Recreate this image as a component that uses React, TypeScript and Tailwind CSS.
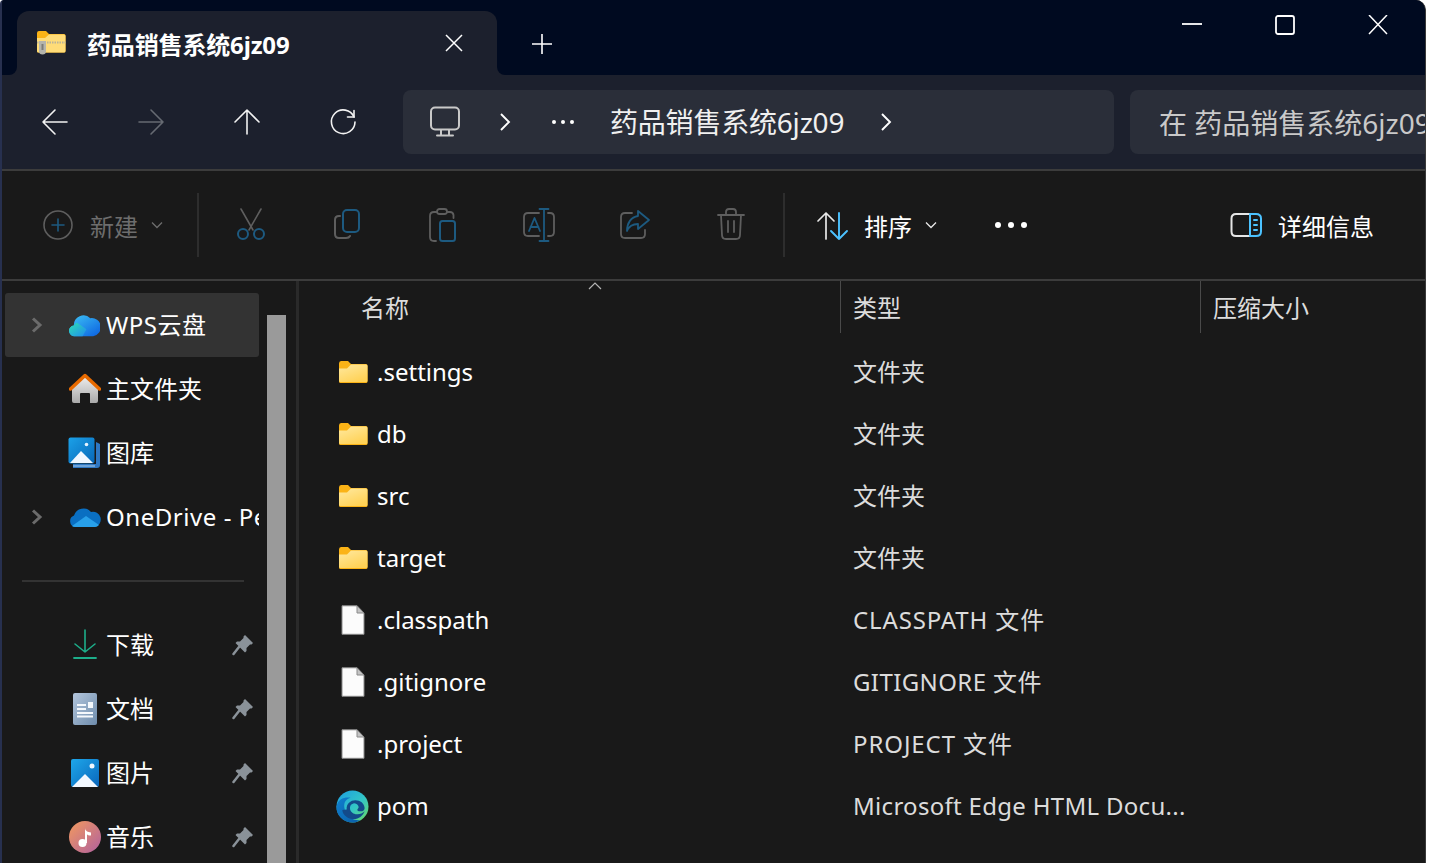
import React from "react";

const blue = "#1d5a80";
const gray = "#5e5e5e";

const Ico: React.FC<{ size?: number; children: React.ReactNode }> = ({ size = 32, children }) => (
    <svg width={size} height={size} viewBox={`0 0 ${size} ${size}`} fill="none" strokeLinecap="round" strokeLinejoin="round" className="shrink-0">
        {children}
    </svg>
);

const Folder = () => (
    <svg width="30" height="24" viewBox="0 0 30 24" className="shrink-0">
        <defs>
            <linearGradient id="folderFill" x1="0" y1="0" x2="0.6" y2="1">
                <stop offset="0" stopColor="#ffe9a0" />
                <stop offset="1" stopColor="#ffd257" />
            </linearGradient>
        </defs>
        <path d="M1 3.500Q1 1 3 1h7l3 3h15q1.500 0 1.500 1.500V21.500q0 1.500-1.500 1.500H2.500Q1 23 1 21.500Z" fill="#fbb316" />
        <path d="M1 8.500 9 8.500 13 4.500h15q1.500 0 1.500 1.500V21q0 1-1.500 1H2.500Q1 22 1 21Z" fill="url(#folderFill)" />
    </svg>
);

const FileIcon = () => (
    <svg width="24" height="30" viewBox="0 0 24 30" className="shrink-0 ml-[1px]">
        <path d="M1 .8H16L23 8V29.300H1Z" fill="#fcfcfc" stroke="#8a8a8a" strokeWidth="1" />
        <path d="M16 .8V8H23Z" fill="#c4c4c4" stroke="#8a8a8a" strokeWidth="1" />
    </svg>
);

const EdgeIcon = () => (
    <svg width="33" height="33" viewBox="0 0 34 34" className="shrink-0">
        <defs>
            <linearGradient id="edgeTop" x1="0" y1="0" x2="1" y2="1">
                <stop offset="0" stopColor="#1b9de2" />
                <stop offset="0.55" stopColor="#33c6c6" />
                <stop offset="1" stopColor="#6fdc5c" />
            </linearGradient>
            <linearGradient id="edgeLow" x1="0" y1="0" x2="1" y2="1">
                <stop offset="0" stopColor="#0f7fce" />
                <stop offset="1" stopColor="#0b5ea8" />
            </linearGradient>
        </defs>
        <circle cx="17" cy="17" r="16.500" fill="url(#edgeTop)" />
        <path d="M.5 17C2 9 9 7 15 8 9 10 7.500 14 9 20c2 7 9 12 16 11-3 2-6 3-9 2.500C7 33 0 26 .5 17Z" fill="url(#edgeLow)" />
        <path d="M11 20C10.500 14 15 10.500 20 10.500c5 0 9 3 9.500 8 .2 2-1.500 3.500-4.500 3.500-2 0-3-.6-3-1.500 0-1.500 2-1.500 1-4-1-2-3-3-5-2.700-3 .5-4 3-3.500 6 .6 3 3.500 5 7 5.200 3 .2 6-.8 8-3-2 5-6 8-11 8-6 0-11.500-4-12-9.500Z" fill="#134a8a" />
    </svg>
);

const ZipFolder = () => (
    <svg width="30" height="26" viewBox="0 0 30 26" className="shrink-0">
        <path d="M1 3Q1 1 3 1h7l3 3h15q1.500 0 1.500 1.500V21q0 1.500-1.500 1.500H2.500Q1 22.500 1 21Z" fill="#fbb316" />
        <path d="M1 8 9 8 13 4.500h15q1.500 0 1.500 1.500V21q0 1.500-1.500 1.500H2.500Q1 22.500 1 21Z" fill="#ffdc78" />
        <path d="M1 12.500H29.500" stroke="#b9b39b" strokeWidth="2" strokeDasharray="1.500 1" />
        <path d="M3 11h7v10q0 3.500-3.500 3.500T3 21Z" fill="#b4b4ac" />
        <path d="M5.500 14h2v6h-2Z" fill="#7c7c78" />
    </svg>
);

const Pin = () => (
    <svg width="22" height="22" viewBox="0 0 22 22" className="shrink-0">
        <path d="M13 1 21 9 19.500 10.500 18 10.500 14.500 14 14.500 17 13 18.500 3.500 9 5 7.500 8 7.500 11.500 4 11.500 2.500Z" fill="#8a9299" />
        <path d="M7 13 1.500 20" stroke="#8a9299" strokeWidth="2.500" strokeLinecap="round" />
    </svg>
);

const WpsCloud = () => (
    <svg width="31" height="24" viewBox="0 0 32 24" className="shrink-0">
        <defs>
            <linearGradient id="wpsA" x1="0" y1="0" x2="1" y2="1">
                <stop offset="0" stopColor="#2ee0b0" />
                <stop offset="1" stopColor="#1f8cf0" />
            </linearGradient>
            <linearGradient id="wpsB" x1="0" y1="0" x2="1" y2="1">
                <stop offset="0" stopColor="#3fc5f5" />
                <stop offset="1" stopColor="#0a5fe0" />
            </linearGradient>
        </defs>
        <path d="M6 23.500a5.500 5.500 0 0 1-1-11A10 10 0 0 1 22 5a8 8 0 0 1 3 18.500Z" fill="url(#wpsB)" />
        <path d="M6 23.500a5.500 5.500 0 0 1-1-11q1-1.500 3-3l10 7-4 7Z" fill="url(#wpsA)" />
    </svg>
);

const HomeIcon = () => (
    <svg width="32" height="32" viewBox="0 0 32 32" className="shrink-0">
        <defs>
            <linearGradient id="homeFill" x1="0" y1="0" x2="0" y2="1">
                <stop offset="0" stopColor="#ececec" />
                <stop offset="1" stopColor="#a9a9a9" />
            </linearGradient>
        </defs>
        <path d="M3 15 16 4 29 15V28q0 2-2 2h-6V21q0-1-1-1h-8q-1 0-1 1v9H5q-2 0-2-2Z" fill="url(#homeFill)" />
        <path d="M1.500 16 16 2.500 30.500 16" stroke="#e76a00" strokeWidth="3.500" fill="none" strokeLinecap="round" strokeLinejoin="round" />
    </svg>
);

const GalleryIcon = () => (
    <svg width="33" height="33" viewBox="0 0 33 33" className="shrink-0">
        <defs>
            <linearGradient id="galFill" x1="0" y1="0" x2="1" y2="1">
                <stop offset="0" stopColor="#1ba1e8" />
                <stop offset="1" stopColor="#0867b8" />
            </linearGradient>
        </defs>
        <path d="M5 31h24q3 0 3-3V7l-4-2v22H5Z" fill="#2f78c4" />
        <path d="M5 28h22v2H5Z" fill="#6ea3d8" />
        <rect x="0.500" y="0.500" width="26" height="26" rx="2" fill="url(#galFill)" />
        <circle cx="18.500" cy="7.500" r="1.800" fill="#e6f4ff" />
        <path d="M2 26 13 14l12 12Z" fill="#f0f7ff" />
    </svg>
);

const DownloadIcon = () => (
    <Ico>
        <path d="M16 1V23M6 15l10 8 10-8" stroke="#1dae8a" strokeWidth="1.600" />
        <path d="M5 29H27" stroke="#1dae8a" strokeWidth="1.800" />
    </Ico>
);

const DocIcon = () => (
    <svg width="24" height="32" viewBox="0 0 24 32" className="shrink-0">
        <defs>
            <linearGradient id="docFill" x1="0" y1="0" x2="1" y2="1">
                <stop offset="0" stopColor="#b3c6dc" />
                <stop offset="1" stopColor="#6e8cac" />
            </linearGradient>
        </defs>
        <rect width="24" height="32" rx="2" fill="url(#docFill)" />
        <path d="M4 11h9v2H4ZM4 15h9v2H4ZM4 19h16v2H4ZM4 22.500h16v2H4ZM15 9h5v6h-5Z" fill="#f4f8fc" />
    </svg>
);

const PicIcon = () => (
    <svg width="28" height="28" viewBox="0 0 28 28" className="shrink-0">
        <defs>
            <linearGradient id="picFill" x1="0" y1="0" x2="1" y2="1">
                <stop offset="0" stopColor="#1ea7ea" />
                <stop offset="1" stopColor="#0a66bb" />
            </linearGradient>
        </defs>
        <rect width="28" height="28" rx="2" fill="url(#picFill)" />
        <circle cx="21" cy="7" r="2.500" fill="#f2f8ff" />
        <path d="M1 28 14 15 27 28Z" fill="#f2f8ff" />
    </svg>
);

const MusicIcon = () => (
    <svg width="32" height="32" viewBox="0 0 32 32" className="shrink-0">
        <defs>
            <linearGradient id="musicFill" x1="0" y1="0" x2="1" y2="1">
                <stop offset="0" stopColor="#f39a5e" />
                <stop offset="1" stopColor="#b0609f" />
            </linearGradient>
        </defs>
        <circle cx="16" cy="16" r="16" fill="url(#musicFill)" />
        <circle cx="13.500" cy="22" r="4" fill="#fff" />
        <path d="M16 22V7c0 3 3 4 6 4.500v3c-2 0-4-.5-4-1.500V22Z" fill="#fff" />
    </svg>
);

const Chevron = () => (
    <svg width="14" height="18" viewBox="0 0 14 18" className="shrink-0">
        <path d="M3 2.500 10 9 3 15.500" stroke="#6b6b6b" strokeWidth="3" fill="none" />
    </svg>
);

const SmallDown = ({ color }: { color: string }) => (
    <svg width="12" height="8" viewBox="0 0 12 8" className="shrink-0">
        <path d="M1 1.500 6 6.500 11 1.500" stroke={color} strokeWidth="1.300" fill="none" />
    </svg>
);

const NavBtn: React.FC<{ children: React.ReactNode }> = ({ children }) => (
    <div className="w-[96px] h-[64px] flex items-center justify-center">{children}</div>
);

const sideRows = [
    { icon: <HomeIcon />, label: "主文件夹" },
    { icon: <GalleryIcon />, label: "图库" },
    { icon: <svg width="32" height="20" viewBox="0 0 32 20" className="shrink-0"><path d="M6 20a6 6 0 0 1-1-11.500A10 10 0 0 1 22 5a7.500 7.500 0 0 1 4 15Z" fill="#0a6fc2" /><path d="M6 20a6 6 0 0 1-3-1L17 9l13 9q-2 2-4 2Z" fill="#28a0ea" /></svg>, label: "OneDrive - Personal", arrow: true, cls: "tracking-[0.55px]" },
];

const pinned = [
    { icon: <DownloadIcon />, label: "下载" },
    { icon: <DocIcon />, label: "文档" },
    { icon: <PicIcon />, label: "图片" },
    { icon: <MusicIcon />, label: "音乐" },
];

const files = [
    { icon: <Folder />, name: ".settings", type: "文件夹", cls: "" },
    { icon: <Folder />, name: "db", type: "文件夹", cls: "" },
    { icon: <Folder />, name: "src", type: "文件夹", cls: "" },
    { icon: <Folder />, name: "target", type: "文件夹", cls: "" },
    { icon: <FileIcon />, name: ".classpath", type: "CLASSPATH 文件", cls: "tracking-[0.85px]" },
    { icon: <FileIcon />, name: ".gitignore", type: "GITIGNORE 文件", cls: "tracking-[0.4px]" },
    { icon: <FileIcon />, name: ".project", type: "PROJECT 文件", cls: "tracking-[0.9px]" },
    { icon: <EdgeIcon />, name: "pom", type: "Microsoft Edge HTML Docu...", cls: "tracking-[0.3px]" },
];

const SideRow: React.FC<{ icon: React.ReactNode; label: string; arrow?: boolean; active?: boolean; pin?: boolean; cls?: string }> = ({ icon, label, arrow, active, pin, cls }) => (
    <div className={`relative w-[254px] h-[64px] shrink-0 flex items-center rounded-[3px] ${active ? "bg-[#333333]" : ""}`}>
        <div className="w-[64px] flex justify-center">
            <div className="w-[14px]">{arrow && <Chevron />}</div>
        </div>
        <div className="w-[33px] flex justify-center -ml-[1px]">{icon}</div>
        <span className={`ml-[5px] overflow-hidden whitespace-nowrap text-white w-[153px] ${cls ?? ""}`}>{label}</span>
        {pin && <div className="absolute left-[227px] top-[21px]"><Pin /></div>}
    </div>
);

export default function App() {
    return (
        <div className="w-[1429px] h-[863px] bg-white overflow-hidden font-['Noto_Sans','Noto_Sans_CJK_SC',sans-serif] text-[24px] leading-[32px]">
            <div className="w-[1426px] h-[863px] flex flex-col bg-[#191919] rounded-tr-[10px] rounded-tl-[4px] overflow-hidden border-l-2 border-l-[#27304f] border-r border-r-[#3a3a3a]">
                {/* title bar */}
                <div className="h-[75px] shrink-0 bg-[#000a20] flex">
                    <div className="relative ml-[15px] mt-[11px] w-[480px] h-[64px] bg-[#1c202d] rounded-t-[12px] flex items-center">
                        {/* inverted corners where the tab meets the bar */}
                        <div className="absolute -left-[10px] bottom-0 w-[10px] h-[10px] bg-[#1c202d]">
                            <div className="w-full h-full bg-[#000a20] rounded-br-[8px]" />
                        </div>
                        <div className="absolute -right-[10px] bottom-0 w-[10px] h-[10px] bg-[#1c202d]">
                            <div className="w-full h-full bg-[#000a20] rounded-bl-[8px]" />
                        </div>
                        <div className="ml-[19px]"><ZipFolder /></div>
                        <span className="ml-[21px] mt-[4px] font-bold text-[#ffffff] tracking-[-0.15px]">药品销售系统6jz09</span>
                        <svg width="20" height="20" viewBox="0 0 20 20" className="ml-auto mr-[33px]">
                            <path d="M2 2 18 18M18 2 2 18" stroke="#fff" strokeWidth="1.500" />
                        </svg>
                    </div>
                    <svg width="22" height="22" viewBox="0 0 22 22" className="ml-[34px] mt-[33px]">
                        <path d="M11 1V21M1 11H21" stroke="#fff" strokeWidth="1.600" />
                    </svg>
                    <div className="ml-auto flex items-start mt-[15px] mr-[37px] gap-[73px]">
                        <svg width="20" height="20" viewBox="0 0 20 20"><path d="M0 9H20" stroke="#fff" strokeWidth="1.800" /></svg>
                        <svg width="20" height="20" viewBox="0 0 20 20"><rect x="1" y="1" width="18" height="18" rx="2" stroke="#fff" strokeWidth="1.800" fill="none" /></svg>
                        <svg width="20" height="20" viewBox="0 0 20 20"><path d="M1 0 19 19M19 0 1 19" stroke="#fff" strokeWidth="1.500" /></svg>
                    </div>
                </div>

                {/* nav bar */}
                <div className="h-[96px] shrink-0 bg-[#1c202d] border-b-2 border-b-[#3c3c3c] flex pt-[15px] pl-[5px]">
                    <NavBtn>
                        <Ico size={28}><path d="M2 14H26M14 2 2 14l12 12" stroke="#f2f2f2" strokeWidth="1.600" /></Ico>
                    </NavBtn>
                    <NavBtn>
                        <Ico size={28}><path d="M2 14H26M14 2l12 12-12 12" stroke="#666a72" strokeWidth="1.600" /></Ico>
                    </NavBtn>
                    <NavBtn>
                        <Ico size={28}><path d="M14 26V2M2 14 14 2l12 12" stroke="#f2f2f2" strokeWidth="1.600" /></Ico>
                    </NavBtn>
                    <NavBtn>
                        <Ico size={28}>
                            <path d="M25 9A11.800 11.800 0 1 0 26 14" stroke="#f2f2f2" strokeWidth="1.600" />
                            <path d="M25 2.500V9H18.500" stroke="#f2f2f2" strokeWidth="1.600" strokeLinejoin="miter" />
                        </Ico>
                    </NavBtn>
                    <div className="ml-[12px] w-[711px] h-[64px] rounded-[8px] bg-[#2a2e39] flex items-center text-[28px] text-[#f0f0f0]">
                        <div className="ml-[26px]">
                            <Ico size={32}><rect x="2" y="1.500" width="28" height="22" rx="4" stroke="#c9c9c9" strokeWidth="2" /><path d="M12 24v5M20 24v5M8 29.500H24" stroke="#c9c9c9" strokeWidth="2" /></Ico>
                        </div>
                        <svg width="14" height="20" viewBox="0 0 14 20" className="ml-[37px]"><path d="M3 2 11 10 3 18" stroke="#fff" strokeWidth="1.900" fill="none" /></svg>
                        <div className="ml-[40px] flex gap-[5px]">
                            <span className="w-[4px] h-[4px] rounded-full bg-white" />
                            <span className="w-[4px] h-[4px] rounded-full bg-white" />
                            <span className="w-[4px] h-[4px] rounded-full bg-white" />
                        </div>
                        <span className="ml-[36px] whitespace-nowrap tracking-[-0.2px]">药品销售系统6jz09</span>
                        <svg width="14" height="20" viewBox="0 0 14 20" className="ml-[35px]"><path d="M3 2 11 10 3 18" stroke="#fff" strokeWidth="1.900" fill="none" /></svg>
                    </div>
                    <div className="ml-[16px] flex-1 h-[64px] rounded-l-[8px] bg-[#2a2e39] flex items-center pl-[29px] pt-[2px] text-[28px] text-[#c9c9c9] whitespace-nowrap overflow-hidden">
                        在 药品销售系统6jz09
                    </div>
                </div>

                {/* toolbar */}
                <div className="h-[110px] shrink-0 border-b-2 border-b-[#3c3c3c] flex items-center">
                    <div className="ml-[41px]">
                        <Ico size={30}><circle cx="15" cy="15" r="14" stroke={gray} strokeWidth="1.600" /><path d="M15 9V21M9 15H21" stroke={blue} strokeWidth="1.600" /></Ico>
                    </div>
                    <span className="ml-[17px] mt-[4px] text-[#6d6d6d] whitespace-nowrap">新建</span>
                    <div className="ml-[13px]"><SmallDown color="#6d6d6d" /></div>
                    <div className="ml-[34px] w-[2px] h-[64px] bg-[#2d2d2d]" />
                    <div className="ml-[4px] flex">
                        <div className="w-[96px] flex justify-center">
                            <Ico size={32}><path d="M6 1l12 21M26 1 14 22" stroke={gray} strokeWidth="1.600" /><circle cx="8" cy="26" r="5" stroke={blue} strokeWidth="2" /><circle cx="24" cy="26" r="5" stroke={blue} strokeWidth="2" /></Ico>
                        </div>
                        <div className="w-[96px] flex justify-center">
                            <Ico size={32}><rect x="12" y="2" width="16" height="22" rx="4" stroke={blue} strokeWidth="2" /><path d="M9 8H8q-4 0-4 4v14q0 4 4 4h7q3 0 4-2" stroke={gray} strokeWidth="2" /></Ico>
                        </div>
                        <div className="w-[96px] flex justify-center pl-[2px]">
                            <Ico size={34}><rect x="13" y="13" width="15" height="20" rx="2.500" stroke={blue} strokeWidth="2" /><rect x="10" y="1" width="10" height="5" rx="2.500" stroke={gray} strokeWidth="1.800" /><path d="M10 4H7Q3 4 3 8V29Q3 33 7 33H9M20 4h3q3 0 3.500 3v3" stroke={gray} strokeWidth="1.800" /></Ico>
                        </div>
                        <div className="w-[96px] flex justify-center">
                            <Ico size={34}><path d="M17 5H6Q2 5 2 9V24Q2 28 6 28H17M26 5h2q4 0 4 4V24q0 4-4 4h-2" stroke={gray} strokeWidth="1.800" /><path d="M22 1V33M17.500 1H26.500M17.500 33H26.500M7 23 12.500 10 18 23M8.500 19H16.500" stroke={blue} strokeWidth="1.800" /></Ico>
                        </div>
                        <div className="w-[96px] flex justify-center">
                            <Ico size={32}><path d="M13 5H6Q2 5 2 9V26Q2 30 6 30H22Q26 30 26 26V22" stroke={gray} strokeWidth="1.800" /><path d="M19 3 30 12 19 21V16C14 16 10 18 8 23 8 15 12 9 19 8Z" stroke={blue} strokeWidth="1.800" /></Ico>
                        </div>
                        <div className="w-[96px] flex justify-center">
                            <Ico size={32}><path d="M3 7H29M11 7V4Q11 1 14 1H18Q21 1 21 4V7M6 7 7 27Q7 31 11 31H21Q25 31 25 27L26 7M13 13V24M19 13V24" stroke={gray} strokeWidth="1.800" /></Ico>
                        </div>
                    </div>
                    <div className="ml-[4px] w-[2px] h-[64px] bg-[#2d2d2d]" />
                    <div className="ml-[31px]">
                        <Ico size={34}><path d="M10 31V5M2 13 10 5l8 8" stroke="#e8e8e8" strokeWidth="1.700" /><path d="M23 5V31M15 23l8 8 8-8" stroke="#4cc2ff" strokeWidth="1.900" /></Ico>
                    </div>
                    <span className="ml-[14px] mt-[4px] text-white whitespace-nowrap">排序</span>
                    <div className="ml-[13px]"><SmallDown color="#e8e8e8" /></div>
                    <div className="ml-[58px] flex gap-[7px]">
                        <span className="w-[6px] h-[6px] rounded-full bg-white" />
                        <span className="w-[6px] h-[6px] rounded-full bg-white" />
                        <span className="w-[6px] h-[6px] rounded-full bg-white" />
                    </div>
                    <div className="ml-[203px]">
                        <Ico size={32}><path d="M20 5H6Q1.500 5 1.500 9.500V22.500Q1.500 27 6 27H20" stroke="#e6e6e6" strokeWidth="2" /><path d="M20 5H26Q31 5 31 9.500V22.500Q31 27 26 27H20Z" stroke="#4cc2ff" strokeWidth="2" /><path d="M24 11H27M24 16H27M24 21H27" stroke="#4cc2ff" strokeWidth="2" /></Ico>
                    </div>
                    <span className="ml-[16px] mt-[4px] text-white whitespace-nowrap">详细信息</span>
                </div>

                {/* content */}
                <div className="flex-1 flex min-h-0">
                    <div className="w-[294px] shrink-0 flex">
                        <div className="w-[265px] shrink-0 pt-[12px] pl-[3px] flex flex-col">
                            <SideRow icon={<WpsCloud />} label="WPS云盘" arrow active cls="tracking-[0.5px]" />
                            {sideRows.map((r) => (
                                <SideRow key={r.label} icon={r.icon} label={r.label} arrow={r.arrow} cls={r.cls} />
                            ))}
                            <div className="ml-[17px] mt-[31px] mb-[31px] w-[222px] h-[2px] shrink-0 bg-[#333333]" />
                            {pinned.map((r) => (
                                <SideRow key={r.label} icon={r.icon} label={r.label} pin />
                            ))}
                        </div>
                        <div className="w-[19px] mt-[34px] bg-[#9a9a9a]" />
                    </div>
                    <div className="w-[3px] shrink-0 bg-[#2a2a2a]" />
                    <div className="flex-1 min-w-0 flex flex-col">
                        <div className="relative h-[52px] shrink-0 grid grid-cols-[541px_360px_1fr] text-[#dcdcdc]">
                            <div className="pl-[62px] pt-[11px]">名称</div>
                            <div className="border-l border-l-[#4a4a4a] pl-[12px] pt-[11px]">类型</div>
                            <div className="border-l border-l-[#4a4a4a] pl-[12px] pt-[11px]">压缩大小</div>
                            <svg width="14" height="8" viewBox="0 0 14 8" className="absolute left-[289px] top-[1px]">
                                <path d="M1 7 7 1 13 7" stroke="#b5b5b5" strokeWidth="1.200" fill="none" />
                            </svg>
                        </div>
                        <div className="pt-[8px] flex flex-col">
                            {files.map((f) => (
                                <div key={f.name} className="h-[62px] shrink-0 grid grid-cols-[541px_1fr] items-center">
                                    <div className="flex items-center">
                                        <div className="ml-[38px] w-[31px] flex justify-center">{f.icon}</div>
                                        <span className="ml-[9px] text-white">{f.name}</span>
                                    </div>
                                    <span className={`pl-[13px] text-[#dcdcdc] whitespace-nowrap ${f.cls}`}>{f.type}</span>
                                </div>
                            ))}
                        </div>
                    </div>
                </div>
            </div>
        </div>
    );
}
